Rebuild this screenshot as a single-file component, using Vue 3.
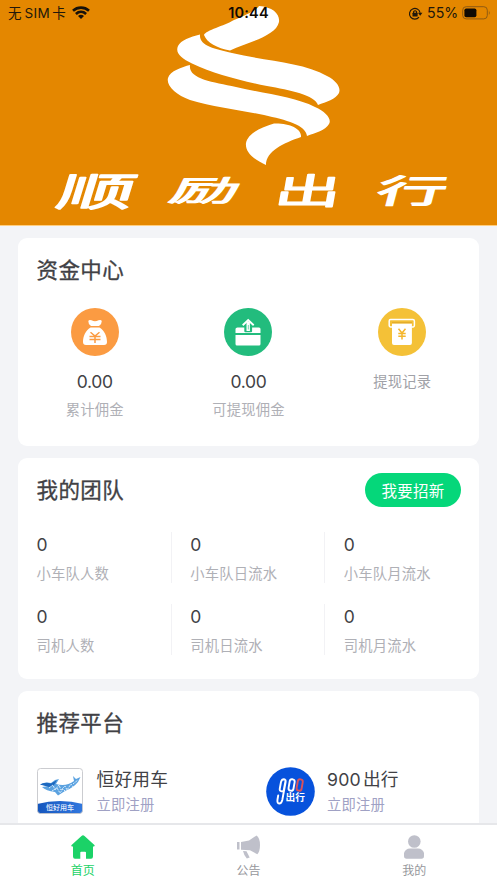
<script setup>
const funds = [
  { icon: 'bag', value: '0.00', label: '累计佣金' },
  { icon: 'box', value: '0.00', label: '可提现佣金' },
  { icon: 'slip', value: '', label: '提现记录' },
]
const team = [
  '小车队人数', '小车队日流水', '小车队月流水',
  '司机人数', '司机日流水', '司机月流水',
]
const tabs = [
  { key: 'home', label: '首页' },
  { key: 'news', label: '公告' },
  { key: 'me', label: '我的' },
]
</script>

<template>
  <div class="page">
    <header class="banner">
      <svg class="banner-art" viewBox="0 0 497 225">
        <g fill="#fff">
          <path d="M259 6C273 7 280 14 279 22C276 36 249 42 230 50.500C217 48 207 43 204 35C206 30 224 26 234 20C245 15 256 11 259 6Z" />
          <path d="M200 34.500C199 46 215 49 232 53C264 61 303 62 327 76C337 81 341 88 339 93C336 99 326 102 318 105C315 95 290 90 267 86C238 80 214 74 192 63.500C181 58 175 53 178 46C181 40 190 37 200 34.500Z" />
          <path d="M190 65C188 79 212 82 236 87C266 94 295 97 315 107C326 112 332 119 329 124C326 130 315 133 307 136C306 125 286 120 264 115C239 110 214 107 190 100C176 95 166 86 168 78C170 71 182 67 190 65Z" />
          <path d="M274 123.500C290 123 302 129 301 137C284 143 266 151 266 165C252 159 245 151 246 143C248 133 262 127 274 123.500Z" />
        </g>
        <g class="brand" fill="#fff" stroke="#fff">
          <text transform="translate(54 206) skewX(-17)" font-size="39" textLength="77" lengthAdjust="spacingAndGlyphs">顺</text>
          <text transform="translate(167 201) skewX(-26) scale(1 .76)" font-size="38" textLength="68" lengthAdjust="spacingAndGlyphs">励</text>
          <text transform="translate(273 204) skewX(-10) scale(1 .93)" font-size="38" textLength="66" lengthAdjust="spacingAndGlyphs">出</text>
          <text transform="translate(374 203) skewX(-15) scale(1 .86)" font-size="38" textLength="70" lengthAdjust="spacingAndGlyphs">行</text>
        </g>
      </svg>
      <div class="status">
        <div class="carrier">
          <span>无<i>SIM</i>卡</span>
          <svg class="wifi" viewBox="0 0 18 13" fill="none" stroke="#17120a" stroke-width="2.6">
            <path d="M1 4.800C5.600.6 12.400.6 17 4.800" />
            <path d="M3.900 8C6.900 5.200 11.100 5.200 14.100 8" />
            <path d="M6 10Q9 7.600 12 10L9 12.900Z" fill="#17120a" stroke="none" />
          </svg>
        </div>
        <b class="clock">10:44</b>
        <div class="power">
          <svg class="lock" viewBox="0 0 14 12" fill="none" stroke="#21180b" stroke-width="1.1">
            <path d="M10.300 9.400A5 5 0 1 1 11.300 5.300" />
            <path d="M9.300 5.200H13.500L11.400 8Z" fill="#21180b" stroke="none" />
            <rect x="4.200" y="5.300" width="4.800" height="3.500" rx=".5" fill="#21180b" stroke="none" />
            <path d="M5.200 5.500V4.400Q6.600 2.400 8 4.400V5.500" />
          </svg>
          <span>55%</span>
          <svg class="battery" viewBox="0 0 29 14">
            <rect x=".7" y=".7" width="24.600" height="12.200" rx="3.500" fill="none" stroke="#8f5b12" />
            <rect x="2.400" y="2.500" width="12" height="8.700" rx="1.800" fill="#100b04" />
            <path d="M26.900 4.600Q28.500 6.800 26.900 9Z" fill="#8f5b12" />
          </svg>
        </div>
      </div>
    </header>

    <main class="content">
      <section class="card funds-card">
        <h2>资金中心</h2>
        <div class="funds">
          <div v-for="f in funds" :key="f.label" class="fund">
            <svg v-if="f.icon === 'bag'" viewBox="0 0 48 48">
              <circle cx="24" cy="24" r="24" fill="#fb9b42" />
              <path fill="#fff" d="M17.300 13Q18.200 11.300 20.500 12.300Q24 14.300 27.500 12.300Q30 11.300 30.800 13Q31 15.500 28 18H20Q17 15.500 17.300 13ZM19.500 19.500H28.500C33.500 22.500 36 28.500 36 34Q36 37 33 37H15Q12 37 12 34C12 28.500 14.500 22.500 19.500 19.500Z" />
              <path d="M19.500 24.200L24 28L28.500 24.200M18.500 28.400H29.500M18.500 31.400H29.500M24 28V35" fill="none" stroke="#fb9b42" stroke-width="1.500" />
            </svg>
            <svg v-else-if="f.icon === 'box'" viewBox="0 0 48 48">
              <circle cx="24" cy="24" r="24" fill="#22bc7d" />
              <path fill="#fff" d="M13.500 19.500H35Q36.500 19.500 36.500 21V25H11.500V21Q11.500 19.500 13.500 19.500ZM11.500 27H36.500V36Q36.500 37.500 35 37.500H13Q11.500 37.500 11.500 36Z" />
              <path fill="#22bc7d" d="M20.300 18.500H28.100V23.300Q28.100 24.300 27 24.300H21.400Q20.300 24.300 20.300 23.300Z" />
              <path fill="none" stroke="#fff" stroke-width="1.900" d="M18.700 17.200L24.200 12L29.700 17.200" />
              <path fill="#fff" d="M22.500 13.500H25.900V23H22.500Z" />
              <path fill="#22bc7d" d="M23.900 17H24.500V21.500H23.900Z" />
            </svg>
            <svg v-else viewBox="0 0 48 48">
              <circle cx="24" cy="24" r="24" fill="#f4c137" />
              <path d="M14 19H12.500Q11.200 19 11.200 17.600V13Q11.200 11.600 12.600 11.600H34.800Q36.400 11.600 36.400 13V17.600Q36.400 19 35.200 19H33.500" fill="none" stroke="#fff" stroke-width="1.500" />
              <path d="M14 15.500H33.900V35Q33.900 37 32 37H16Q14 37 14 35Z" fill="#fff" />
              <path d="M14 14.600H33.900" stroke="#e3ac2b" stroke-width="1.400" />
              <path d="M20.500 20.800L24 25L27.500 20.800M20.300 25.400H27.700M20.300 28.300H27.700M24 25V31.500" fill="none" stroke="#f4b62c" stroke-width="1.500" />
            </svg>
            <strong v-if="f.value">{{ f.value }}</strong>
            <span>{{ f.label }}</span>
          </div>
        </div>
      </section>

      <section class="card team-card">
        <div class="team-head">
          <h2>我的团队</h2>
          <button>我要招新</button>
        </div>
        <div class="team">
          <div v-for="t in team" :key="t" class="stat">
            <strong>0</strong>
            <span>{{ t }}</span>
          </div>
        </div>
      </section>

      <section class="card platform-card">
        <h2>推荐平台</h2>
        <div class="platforms">
          <div class="platform">
            <svg viewBox="0 0 48 48">
              <defs>
                <linearGradient id="sea"><stop stop-color="#1556bd" /><stop offset="1" stop-color="#3278df" /></linearGradient>
                <clipPath id="tile"><rect x=".5" y="1.500" width="45" height="45" rx="3" /></clipPath>
              </defs>
              <rect x=".5" y="1.500" width="45" height="45" rx="3" fill="#fff" />
              <path clip-path="url(#tile)" d="M0 37Q23 31 46 37V48H0Z" fill="url(#sea)" />
              <rect x=".5" y="1.500" width="45" height="45" rx="3" fill="none" stroke="#c5c6cb" stroke-width=".9" />
              <path d="M3 17.500Q8 14.500 14 16L18 13L22 12L19 17Q29 20 37 14L36 9L39 12L43.500 10L41 15Q36 21 28 24L21 28.500L18 25Q9 24 5 20L12 19Z" fill="#5ba2e0" />
              <path d="M3 17.500Q8 14.500 14 16.500L20 13L17 18L12 20Z" fill="#1c68bf" />
              <path d="M12 21L16 18L18 23L22 18L24 23L28 19L30 23L34 17L36 20M15 24L20 21L23 26L26 22L29 25M36 17L41 13" fill="none" stroke="#e8f5ff" stroke-width=".9" stroke-dasharray="2 1" />
              <text class="tile-name" x="23" y="43" text-anchor="middle" font-size="7" fill="#eaf2ff">恒好用车</text>
            </svg>
            <div class="platform-text"><strong>恒好用车</strong><span>立即注册</span></div>
          </div>
          <div class="platform">
            <svg class="round" viewBox="0 0 49 49">
              <circle cx="24.500" cy="24.500" r="24.300" fill="#0752dc" />
              <g fill="none" stroke="#fff" stroke-width="1.900" stroke-linecap="round">
                <path d="M19.600 13.500L17.700 23.500Q17 24.700 15.500 24.300Q13.300 24.200 13.800 21.500L15 15Q15.800 12.200 18 12.300Q20.100 12.600 19.600 15L16.300 33Q15.500 36.500 13.200 36.500Q10.900 36.200 11.500 32.500L12.200 28.500" />
                <rect x="23.100" y="12.300" width="5" height="11.500" rx="2.400" transform="rotate(10 26 18)" />
                <rect x="31.200" y="12.300" width="5" height="11.500" rx="2.400" transform="rotate(10 34 18)" stroke="#d9525b" />
              </g>
              <text class="round-name" x="19.500" y="33.800" font-size="9.700" fill="#fff">出行</text>
            </svg>
            <div class="platform-text"><strong>900<em>出行</em></strong><span>立即注册</span></div>
          </div>
        </div>
      </section>
    </main>

    <nav class="tabs">
      <div v-for="t in tabs" :key="t.key" class="tab" :class="{ active: t.key === 'home' }">
        <svg v-if="t.key === 'home'" viewBox="0 0 26 26" fill="currentColor">
          <path d="M11.500 1.900Q13 .7 14.500 1.900L24.400 11Q25.400 12.400 23.800 12.600H23V22.500Q23 24.700 21 24.700H16V18.500Q16 17.700 15 17.700H11.200Q10.300 17.700 10.300 18.500V24.700H5Q3 24.700 3 22.500V12.600H2Q.6 12.300 1.600 11Z" />
        </svg>
        <svg v-else-if="t.key === 'news'" viewBox="0 0 26 26" fill="currentColor">
          <path d="M2 8H4.500V15.500H2ZM6 8L14 6.500L21.500 1.500Q25 4 25 11Q25 17.500 22.300 20.200L15 16.200L6 15.700ZM8 17L11.500 17.200L14.700 23.400L11.800 24.500Q8.800 21 8 17Z" />
        </svg>
        <svg v-else viewBox="0 0 26 26" fill="currentColor">
          <circle cx="13.300" cy="7.500" r="6.300" />
          <path d="M9 14.500H17Q21.500 14.500 23 19V22Q23 24.700 20.500 24.700H5.500Q3 24.700 3 22V19Q4.500 14.500 9 14.500Z" />
        </svg>
        <span>{{ t.label }}</span>
      </div>
    </nav>
  </div>
</template>

<style>
body { margin: 0; overflow: hidden; }
</style>

<style scoped>
.page {
  width: 100%;
  height: 883px;
  overflow: hidden;
  display: flex;
  flex-direction: column;
  background: #f3f4f7;
  color: #414145;
  font-family: Inter, "Noto Sans CJK SC", sans-serif;
}
.page * { box-sizing: border-box; }
.page svg { display: block; flex: none; }
.banner {
  position: relative;
  flex: none;
  height: 226px;
  background: #e48700;
  border-bottom: 1px solid #ffce80;
}
.banner-art { width: 497px; height: 225px; }
.brand text {
  font-family: "Noto Sans CJK SC", sans-serif;
  font-weight: 400;
  stroke-width: 1.4;
  stroke-linejoin: round;
}
.status {
  position: absolute;
  inset: 0 0 auto;
  height: 26px;
  padding: 0 6px 0 8px;
  display: grid;
  grid-template-columns: 1fr auto 1fr;
  align-items: center;
  font-size: 14px;
  line-height: 26px;
  color: #21180b;
}
.carrier, .power { display: flex; align-items: center; }
.carrier { gap: 6px; font-size: 13.5px; }
.carrier i { font-style: normal; font-size: 13.5px; letter-spacing: .4px; margin: 0 2px 0 3px; }
.wifi { width: 18px; height: 13px; margin-top: -1px; }
.clock { font-size: 14.5px; font-weight: 600; letter-spacing: .2px; color: #100b04; transform: translateX(-1px); }
.power { justify-content: flex-end; gap: 4px; }
.power span { font-size: 14.2px; letter-spacing: -.1px; }
.lock { width: 15px; height: 13px; }
.battery { width: 29px; height: 14px; margin-top: -1px; }
.content {
  flex: 1;
  min-height: 0;
  overflow: hidden;
  display: flex;
  flex-direction: column;
  gap: 12px;
  padding: 11.5px 18px 0;
}
.card { flex: none; background: #fff; border-radius: 9px; }
.funds-card { height: 208.5px; padding-top: 16px; }
.team-card { height: 220.5px; padding-top: 15px; }
.platform-card { height: 160px; padding-top: 16px; }
h2 {
  margin: 0;
  padding-left: 18.5px;
  font-size: 21.5px;
  font-weight: 400;
  line-height: 32px;
  letter-spacing: .4px;
  -webkit-text-stroke: .3px currentColor;
}
.funds { display: grid; grid-template-columns: repeat(3, 1fr); margin-top: 22.5px; }
.fund { display: flex; flex-direction: column; align-items: center; }
.fund svg { width: 48px; height: 48px; margin-bottom: 11.6px; }
strong { font-weight: 400; }
.fund strong { font-size: 17.5px; line-height: 28px; letter-spacing: -.3px; }
.fund span, .stat span { font-size: 14.3px; line-height: 28px; letter-spacing: .2px; color: #afb0b6; }
.fund:last-child span { color: #a0a1a7; }
.team-head { display: flex; align-items: center; justify-content: space-between; height: 34px; padding-right: 18px; }
button {
  width: 96px;
  height: 34px;
  padding: 0;
  border: 0;
  border-radius: 17px;
  background: #05d77a;
  color: #fff;
  font: 15.5px/33px "Noto Sans CJK SC", sans-serif;
  letter-spacing: .3px;
}
.team { display: grid; grid-template-columns: repeat(3, 1fr); row-gap: 21px; margin-top: 25px; }
.stat {
  height: 51px;
  padding-left: 18.5px;
  display: flex;
  flex-direction: column;
  border-right: 1px solid #f2f2f5;
}
.stat:nth-child(3n) { border-right: 0; }
.stat strong { font-size: 17.5px; line-height: 25px; }
.stat span { line-height: 33px; }
.platforms { display: grid; grid-template-columns: 1fr 1fr; margin-top: 28px; }
.platform { display: flex; gap: 12px; padding-left: 18.5px; height: 49px; }
.platform > svg { width: 48px; height: 48px; }
.platform > svg.round { width: 49px; height: 49px; margin-left: -1px; }
.platform-text { display: flex; flex-direction: column; }
.platform-text strong { font-size: 17.7px; line-height: 25px; letter-spacing: .2px; }
.platform-text em { font-style: normal; margin-left: 2px; }
.platform-text span { font-size: 14.3px; line-height: 25px; letter-spacing: .2px; color: #a0a1c4; }
.tile-name, .round-name { font-family: "Noto Sans CJK SC", sans-serif; font-weight: 500; }
.round-name { font-weight: 700; }
.tabs {
  flex: none;
  height: 60px;
  display: grid;
  grid-template-columns: repeat(3, 1fr);
  background: #fff;
  border-top: 2px solid #e6e7ea;
}
.tab {
  display: flex;
  flex-direction: column;
  align-items: center;
  padding-top: 9px;
  color: #bfc0ca;
}
.tab svg { width: 26px; height: 26px; }
.tab span { font-size: 12px; line-height: 22px; color: #96979c; }
.tab.active, .tab.active span { color: #1bd267; }
</style>
